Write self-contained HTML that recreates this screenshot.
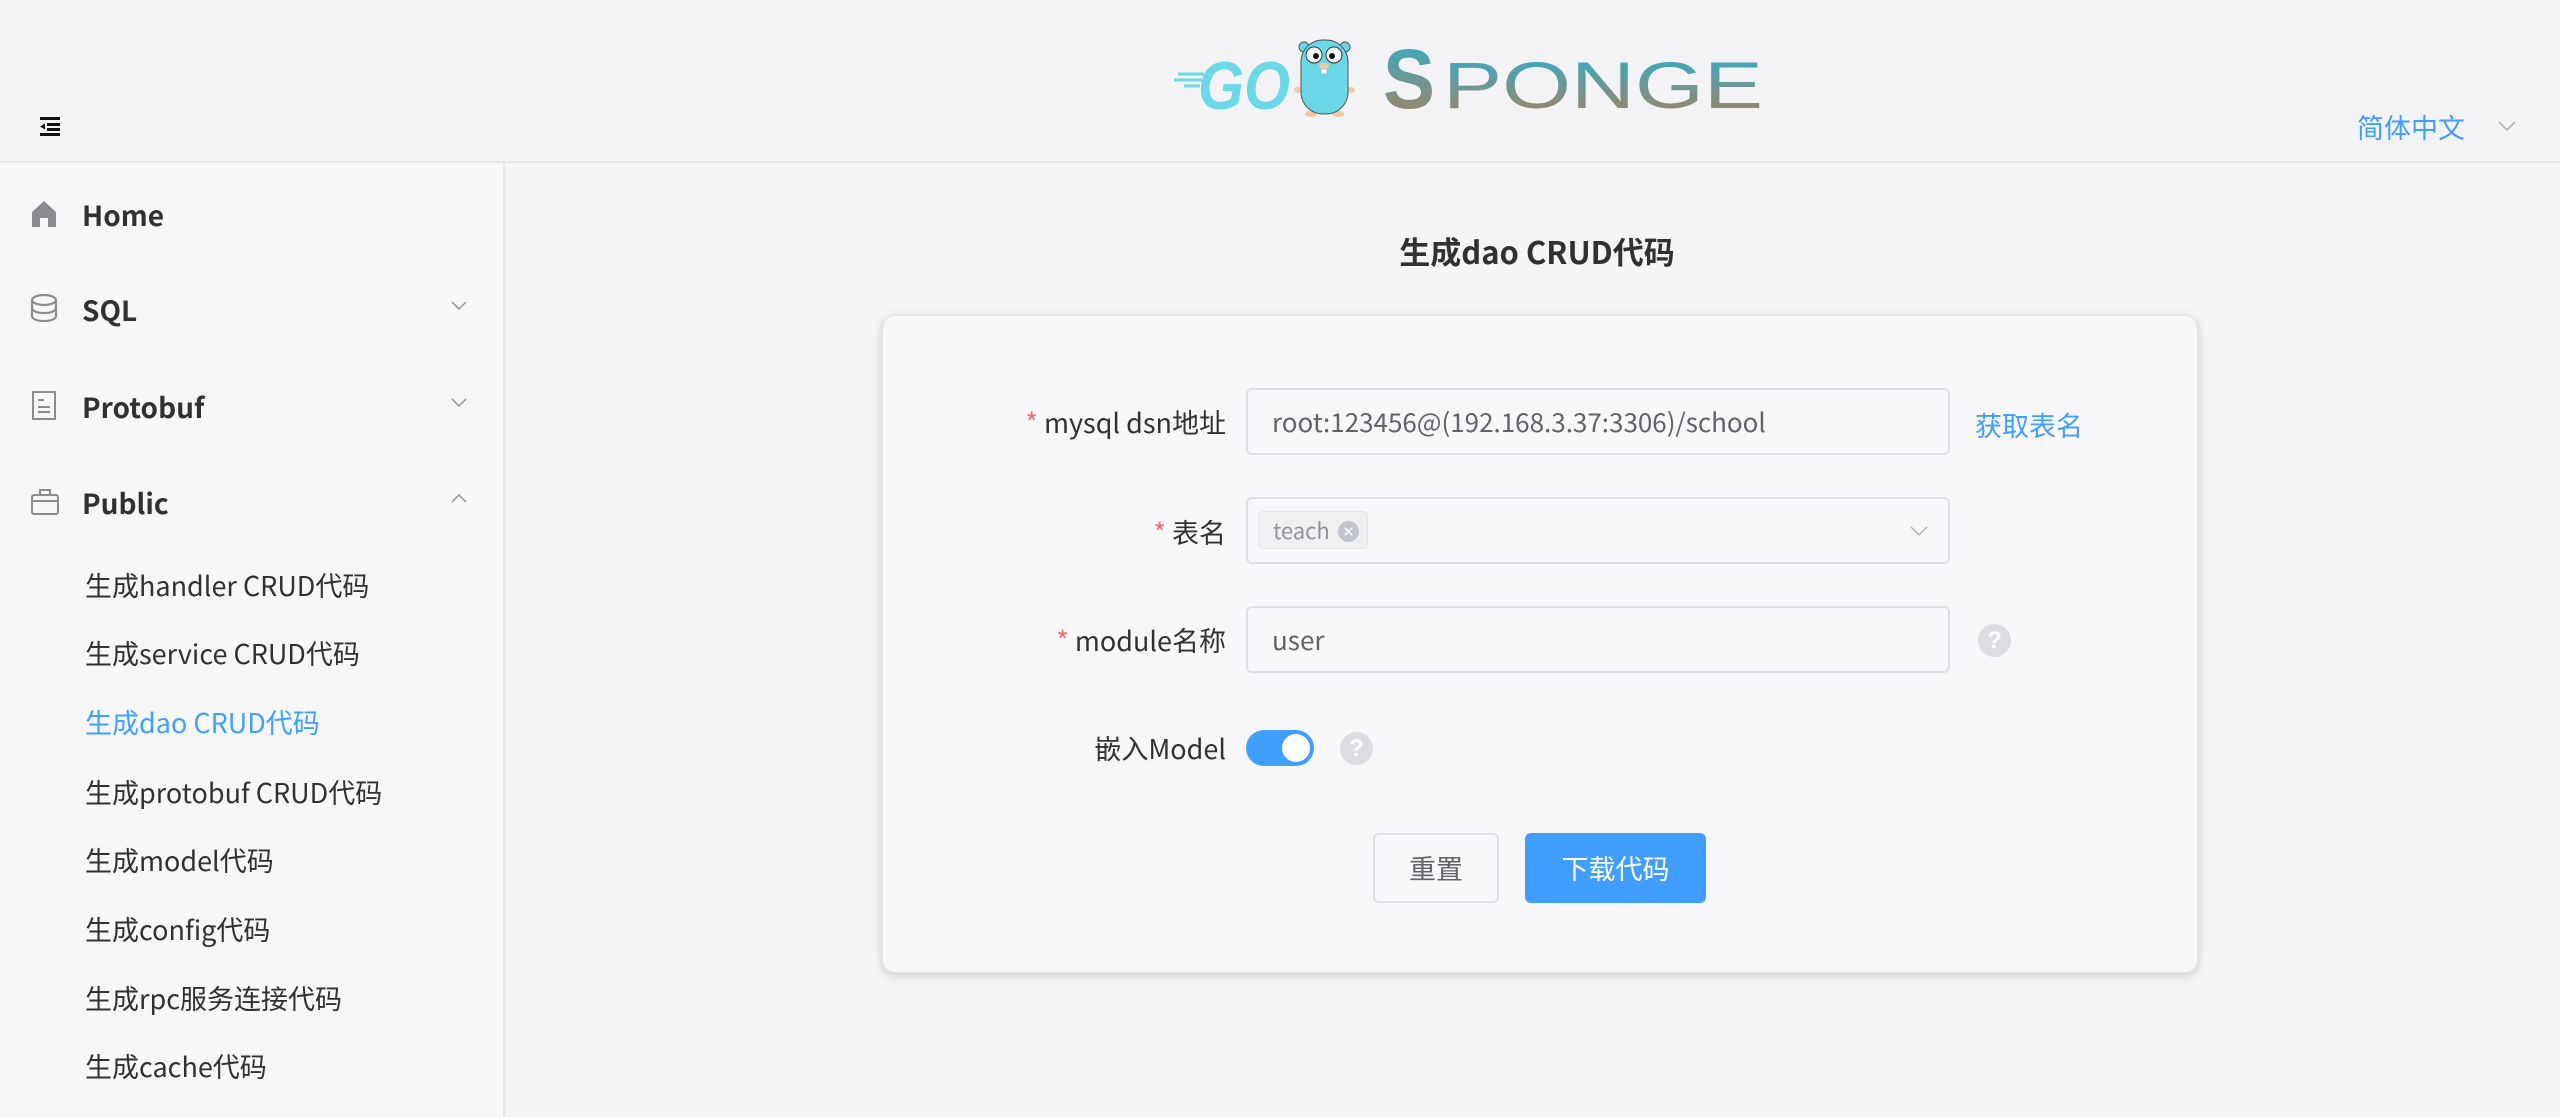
<!DOCTYPE html>
<html><head><meta charset="utf-8"><style>
*{margin:0;padding:0;box-sizing:border-box}
html,body{width:2560px;height:1117px;overflow:hidden;background:#f5f5f7;font-family:"Liberation Sans","Noto Sans CJK SC",sans-serif;color:#303133}
.hdr{position:absolute;left:0;top:0;width:2560px;height:163px;background:#f3f3f6;border-bottom:2px solid #e6e6ea}
.side{position:absolute;left:0;top:163px;width:505px;height:954px;background:#f7f7f8;border-right:2px solid #e8e8ec}
.cjk{font-family:"Noto Sans CJK SC",sans-serif}
.mi{position:absolute;left:82px;font-size:28px;font-weight:bold;color:#303133;font-family:"Noto Sans CJK SC",sans-serif;line-height:40px}
.ic{position:absolute;left:30px}
.chev{position:absolute;left:451px}
.sub{position:absolute;left:85px;font-size:27px;line-height:40px;color:#303133;font-family:"Noto Sans CJK SC",sans-serif}
.title{position:absolute;left:0;width:3074px;text-align:center;top:228px;font-size:31px;font-weight:bold;font-family:"Noto Sans CJK SC",sans-serif}
.card{position:absolute;left:882px;top:315px;width:1316px;height:658px;background:#f7f7f9;border-radius:13px;box-shadow:0 2px 10px rgba(0,0,0,.18);border:1px solid #e4e4e8}
.lbl{position:absolute;right:1334px;font-size:27px;line-height:40px;font-family:"Noto Sans CJK SC",sans-serif;color:#303133;text-align:right;white-space:nowrap}
.lbl b{color:#f56c6c;font-weight:normal;margin-right:6px}
.inp{position:absolute;left:1246px;width:704px;height:67px;border:2px solid #dcdfe6;border-radius:6px;background:#f8f8fa;font-size:26px;color:#606266;padding-left:24px;line-height:63px;font-family:"Noto Sans CJK SC",sans-serif}
.q{position:absolute;width:33px;height:33px;border-radius:50%;background:#dcdde2;color:#fff;font-size:24px;text-align:center;line-height:33px;font-weight:bold}
</style></head><body>
<div class="hdr">
  <svg style="position:absolute;left:40px;top:117px" width="22" height="20" viewBox="0 0 22 20"><rect x="0" y="0" width="20" height="3" fill="#111"/><rect x="7" y="6" width="13" height="3" fill="#111"/><rect x="7" y="11" width="13" height="3" fill="#111"/><rect x="0" y="16" width="20" height="3" fill="#111"/><path d="M0 9.5 L5 6.5 V12.5Z" fill="#111"/></svg>
  <svg style="position:absolute;left:1168px;top:38px" width="600" height="80" viewBox="0 0 600 80">
    <defs><linearGradient id="g" x1="0" y1="0" x2="0" y2="1"><stop offset="0" stop-color="#2bb0cf"/><stop offset="1" stop-color="#a9805d"/></linearGradient></defs>
    <g stroke="#6ad8e6" stroke-width="3"><line x1="10" y1="36" x2="36" y2="36"/><line x1="6" y1="42" x2="34" y2="42"/><line x1="16" y1="48" x2="32" y2="48"/></g>
    <text x="30" y="71" font-family="Liberation Sans" font-weight="bold" font-style="italic" font-size="68" fill="#6ad8e6" textLength="92" lengthAdjust="spacingAndGlyphs">GO</text>
    <circle cx="136" cy="9" r="5" fill="#6ad8e6" stroke="#555"/><circle cx="177" cy="9" r="5" fill="#6ad8e6" stroke="#555"/>
    <ellipse cx="130" cy="52" rx="4" ry="3" fill="#f1c9a0"/><ellipse cx="183" cy="52" rx="4" ry="3" fill="#f1c9a0"/>
    <ellipse cx="143" cy="76" rx="6" ry="3" fill="#f1c9a0"/><ellipse cx="170" cy="76" rx="6" ry="3" fill="#f1c9a0"/>
    <rect x="133" y="2" width="47" height="74" rx="22" fill="#6ad8e6" stroke="#555" stroke-width="1"/>
    <circle cx="146" cy="17" r="8" fill="#fff" stroke="#333"/><circle cx="166" cy="17" r="8" fill="#fff" stroke="#333"/>
    <circle cx="148" cy="18" r="3" fill="#111"/><circle cx="164" cy="18" r="3" fill="#111"/>
    <ellipse cx="156" cy="28" rx="5" ry="3.5" fill="#f1c9a0"/><rect x="153" y="31" width="6" height="5" fill="#fff" stroke="#999" stroke-width=".5"/>
    <text x="215" y="70" font-family="Liberation Sans" font-weight="bold" font-size="84" fill="url(#g)" textLength="52" lengthAdjust="spacingAndGlyphs">S</text>
    <text x="275" y="70" font-family="Liberation Sans" font-size="66" textLength="320" lengthAdjust="spacingAndGlyphs" fill="url(#g)">PONGE</text>
  </svg>
  <div class="cjk" style="position:absolute;left:2357px;top:107px;font-size:27px;color:#409eff;line-height:40px">简体中文</div>
  <svg style="position:absolute;left:2498px;top:120px" width="18" height="12" viewBox="0 0 18 12"><path d="M1 2 L9 10 L17 2" fill="none" stroke="#b0b3b8" stroke-width="1.6"/></svg>
</div>
<div class="side">
  <svg class="ic" style="top:38px" width="28" height="26" viewBox="0 0 28 26"><path d="M2 11 L14 0 L26 11 V26 H18 V17 H10 V26 H2Z" fill="#8a8c91"/></svg>
  <div class="mi" style="top:32px">Home</div>
  <svg class="ic" style="top:131px" width="28" height="28" viewBox="0 0 28 28" fill="none" stroke="#8a8c91" stroke-width="2.2"><ellipse cx="14" cy="6" rx="12" ry="5"/><path d="M2 6v16c0 3 5 5 12 5s12-2 12-5V6M2 14c0 3 5 5 12 5s12-2 12-5"/></svg>
  <div class="mi" style="top:127px">SQL</div>
  <svg class="chev" style="top:138px" width="16" height="10" viewBox="0 0 16 10"><path d="M1 1l7 7 7-7" fill="none" stroke="#909399" stroke-width="1.5"/></svg>
  <svg class="ic" style="top:228px" width="28" height="30" viewBox="0 0 28 30" fill="none" stroke="#8a8c91" stroke-width="2"><rect x="3" y="1" width="22" height="27"/><path d="M8 9h6M8 16h12M8 21h12"/></svg>
  <div class="mi" style="top:224px">Protobuf</div>
  <svg class="chev" style="top:235px" width="16" height="10" viewBox="0 0 16 10"><path d="M1 1l7 7 7-7" fill="none" stroke="#909399" stroke-width="1.5"/></svg>
  <svg class="ic" style="top:325px" width="30" height="28" viewBox="0 0 30 28" fill="none" stroke="#8a8c91" stroke-width="2"><rect x="2" y="7" width="26" height="19" rx="2"/><path d="M10 7V2h10v5M2 13h26"/></svg>
  <div class="mi" style="top:320px">Public</div>
  <svg class="chev" style="top:330px" width="16" height="10" viewBox="0 0 16 10"><path d="M1 9l7-7 7 7" fill="none" stroke="#909399" stroke-width="1.5"/></svg>
  <div class="sub" style="top:402px">生成handler CRUD代码</div>
  <div class="sub" style="top:470px">生成service CRUD代码</div>
  <div class="sub" style="top:539px;color:#409eff">生成dao CRUD代码</div>
  <div class="sub" style="top:609px">生成protobuf CRUD代码</div>
  <div class="sub" style="top:677px">生成model代码</div>
  <div class="sub" style="top:746px">生成config代码</div>
  <div class="sub" style="top:815px">生成rpc服务连接代码</div>
  <div class="sub" style="top:883px">生成cache代码</div>
</div>
<div class="title">生成dao CRUD代码</div>
<div class="card"></div>
<div class="lbl" style="top:402px"><b>*</b>mysql dsn地址</div>
<div class="inp" style="top:388px">root:123456@(192.168.3.37:3306)/school</div>
<div class="cjk" style="position:absolute;left:1975px;top:405px;font-size:27px;line-height:40px;color:#409eff">获取表名</div>
<div class="lbl" style="top:512px"><b>*</b>表名</div>
<div class="inp" style="top:497px;padding-left:10px">
  <div style="position:absolute;left:10px;top:12px;width:110px;height:38px;border:1px solid #e4e5e9;border-radius:5px;background:#f0f0f3;font-size:22px;line-height:36px;color:#909399;padding-left:14px">teach<span style="position:absolute;left:79px;top:9px;width:21px;height:21px;border-radius:50%;background:#c0c4cc;color:#fff;font-size:15px;line-height:21px;text-align:center">✕</span></div>
  <svg style="position:absolute;right:20px;top:27px" width="18" height="11" viewBox="0 0 18 11"><path d="M1 1l8 8 8-8" fill="none" stroke="#b0b3b8" stroke-width="1.5"/></svg>
</div>
<div class="lbl" style="top:620px"><b>*</b>module名称</div>
<div class="inp" style="top:606px">user</div>
<div class="q" style="left:1978px;top:624px">?</div>
<div class="lbl" style="top:728px">嵌入Model</div>
<div style="position:absolute;left:1246px;top:730px;width:68px;height:36px;border-radius:18px;background:#409eff"><div style="position:absolute;right:4px;top:4px;width:28px;height:28px;border-radius:50%;background:#fff"></div></div>
<div class="q" style="left:1340px;top:732px">?</div>
<div class="cjk" style="position:absolute;left:1373px;top:833px;width:126px;height:70px;border:2px solid #dcdfe6;border-radius:6px;background:#f8f8fa;text-align:center;line-height:66px;font-size:27px;color:#606266">重置</div>
<div class="cjk" style="position:absolute;left:1525px;top:833px;width:181px;height:70px;border-radius:6px;background:#409eff;text-align:center;line-height:70px;font-size:27px;color:#fff">下载代码</div>
</body></html>
